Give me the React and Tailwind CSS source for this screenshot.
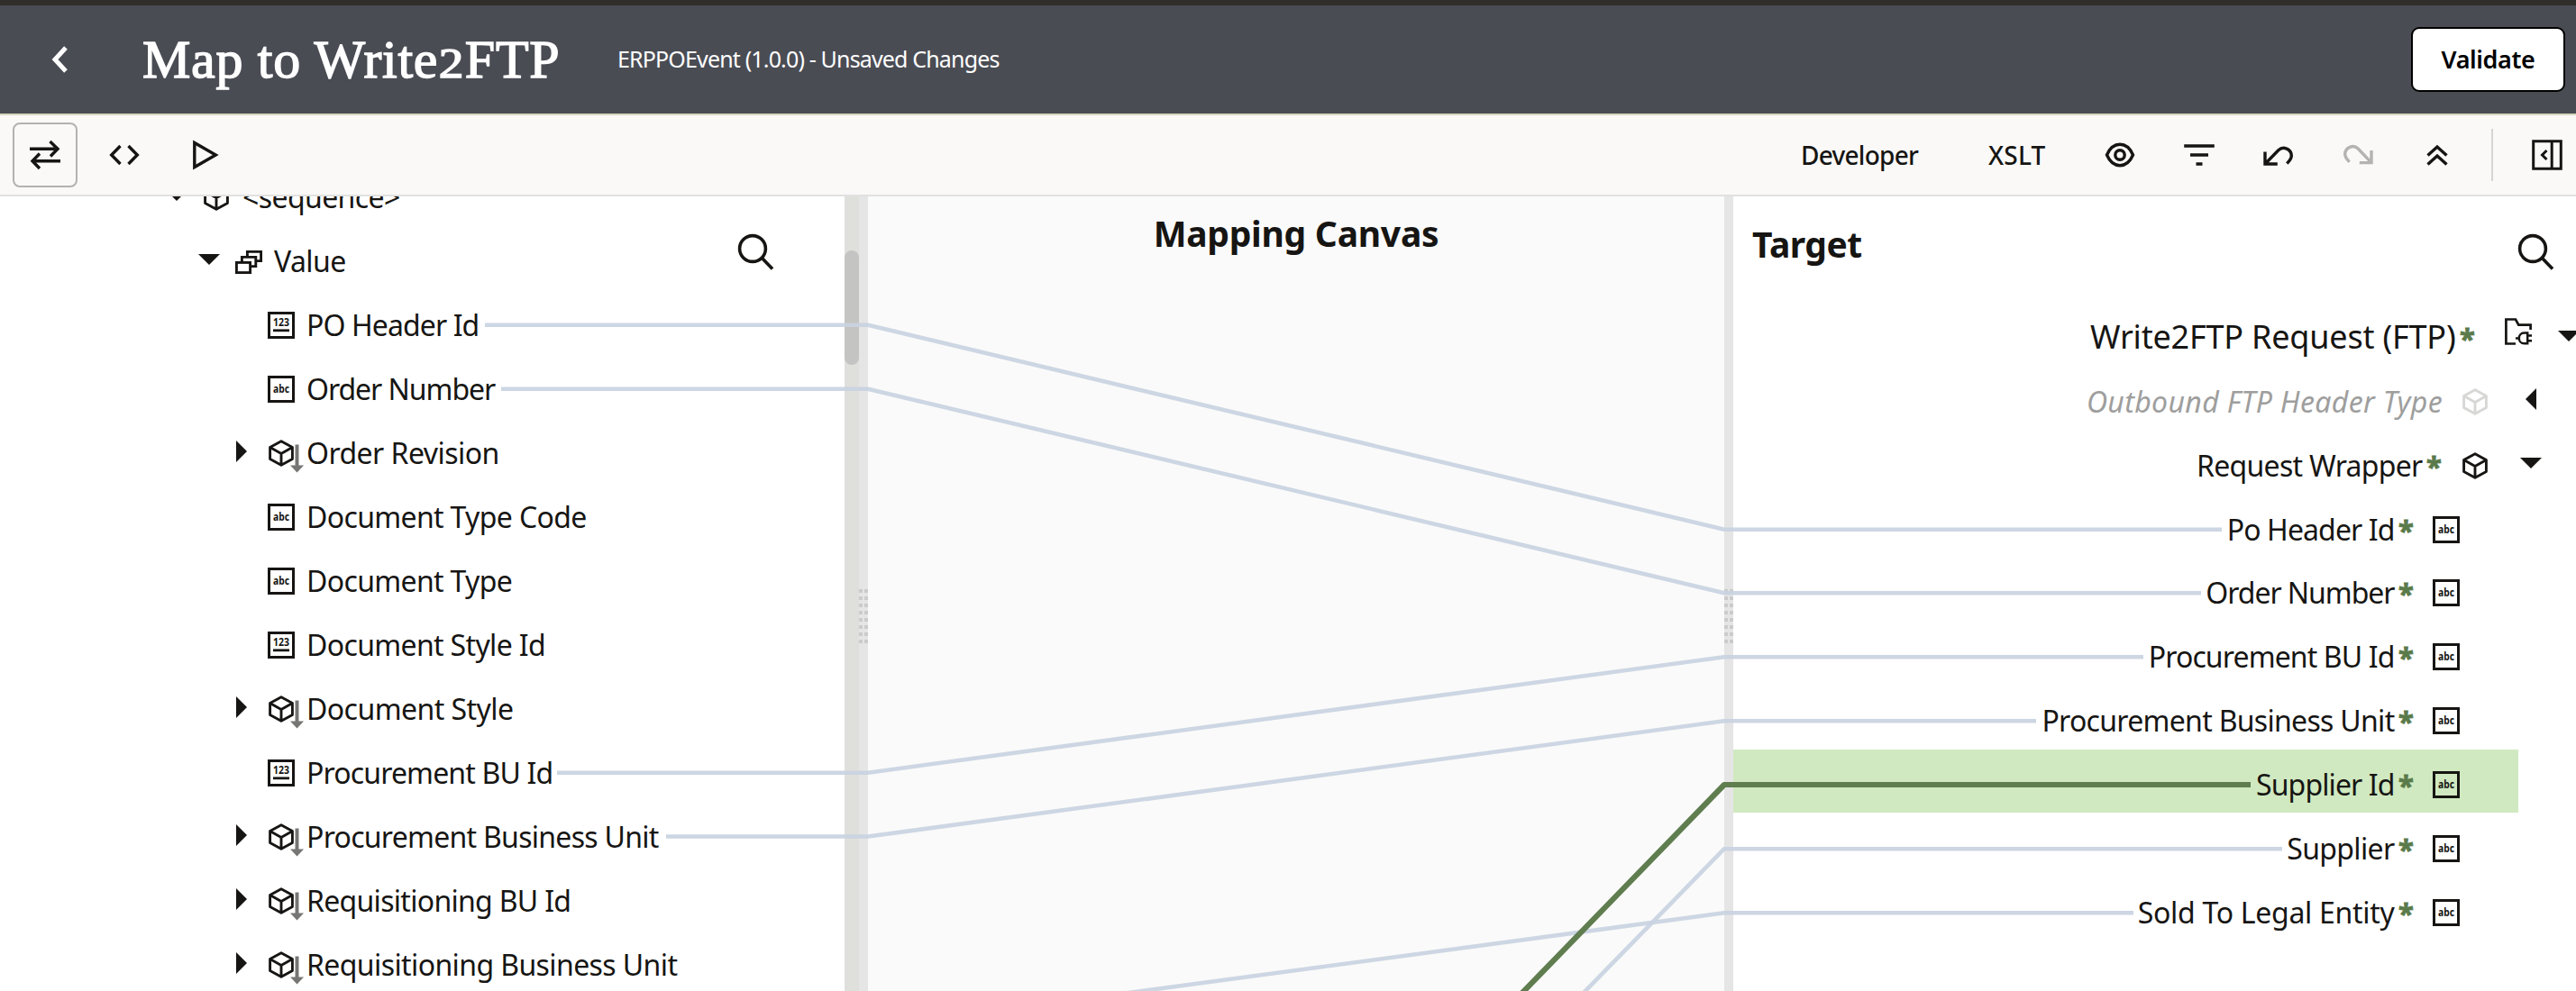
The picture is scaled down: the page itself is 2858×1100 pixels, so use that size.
const INK = '#161513';

function Abc() {
  return (
    <svg width="30" height="30" className="shrink-0" fill="none">
      <rect x="1.5" y="1.5" width="27" height="27" stroke={INK} strokeWidth="3" />
      <text x="6" y="19" fontSize="11.5" fontWeight="700" fill={INK} textLength="18" lengthAdjust="spacingAndGlyphs">abc</text>
    </svg>
  );
}

function Num() {
  return (
    <svg width="30" height="30" className="shrink-0" fill="none">
      <rect x="1.5" y="1.5" width="27" height="27" stroke={INK} strokeWidth="3" />
      <text x="6" y="16.2" fontSize="11.5" fontWeight="700" fill={INK} textLength="18" lengthAdjust="spacingAndGlyphs">123</text>
      <path d="M6 20.8H24" stroke={INK} strokeWidth="2.8" />
    </svg>
  );
}

function Cube({ color = INK }) {
  return (
    <svg width="30" height="30" className="shrink-0" fill="none" stroke={color} strokeWidth="2.9" strokeLinejoin="round">
      <path d="M15 1.8L27.4 8.6V21.4L15 28.2L2.6 21.4V8.6ZM2.6 8.6L15 15.6L27.4 8.6M15 15.6V28.2" />
    </svg>
  );
}

function CubeArrow() {
  return (
    <svg width="41" height="37" className="mt-[7px] shrink-0" fill="none">
      <path d="M15 1.8L27.4 8.6V21.4L15 28.2L2.6 21.4V8.6ZM2.6 8.6L15 15.6L27.4 8.6M15 15.6V28.2" stroke={INK} strokeWidth="2.9" strokeLinejoin="round" />
      <path d="M32.5 5.5V29" stroke="#767674" strokeWidth="4" />
      <path d="M25 28.5H40L32.5 36.5Z" fill="#767674" />
    </svg>
  );
}

function Stack() {
  return (
    <svg width="30" height="30" className="shrink-0" fill="none" stroke={INK} strokeWidth="2.9">
      <rect x="1.4" y="16.4" width="15.2" height="11.2" />
      <path d="M7.4 15.5V10.4H22.8V20.6H18" />
      <path d="M13.4 9.5V4.4H28.6V14.6H24" />
    </svg>
  );
}

function FolderPlug() {
  return (
    <svg width="30" height="30" className="-mt-[12px] shrink-0" fill="none" stroke={INK} strokeWidth="2.7">
      <path d="M12 28.5H1.4V1.5H12L15.3 7.6H28.6V13" />
      <path d="M25.2 16.5V28.3H21.5C18 28.3 15.8 25.5 15.8 22.4C15.8 19.2 18 16.5 21.5 16.5ZM12 22.4H15.8M25.5 19.5H30M25.5 25.3H30" strokeWidth="2.5" />
    </svg>
  );
}

const TRI = { down: 'M0 6H24L12 18Z', right: 'M6 0V24L18 12Z', left: 'M18 0V24L6 12Z' };
function Tri({ dir, className = '' }) {
  return (
    <svg width="24" height="24" className={`shrink-0 ${className}`}>
      {dir && <path d={TRI[dir]} fill={INK} />}
    </svg>
  );
}

function Search() {
  return (
    <svg width="44" height="44" fill="none" stroke={INK} strokeWidth="3.6" className="shrink-0">
      <circle cx="19" cy="19" r="14.4" />
      <path d="M29 29L41 41.5" />
    </svg>
  );
}

function Icon({ children, color = INK, className = '' }) {
  return (
    <svg width="40" height="40" fill="none" stroke={color} strokeWidth="3.4" className={`shrink-0 ${className}`}>
      {children}
    </svg>
  );
}

const sourceRows = [
  ['PO Header Id', 'num', 'tracking-[-0.9px]'],
  ['Order Number', 'abc', 'tracking-[-1.05px]'],
  ['Order Revision', 'cube', 'tracking-[-0.55px]'],
  ['Document Type Code', 'abc', 'tracking-[-0.65px]'],
  ['Document Type', 'abc', 'tracking-[-0.65px]'],
  ['Document Style Id', 'num', 'tracking-[-0.65px]'],
  ['Document Style', 'cube', 'tracking-[-0.55px]'],
  ['Procurement BU Id', 'num', 'tracking-[-0.85px]'],
  ['Procurement Business Unit', 'cube', 'tracking-[-0.72px]'],
  ['Requisitioning BU Id', 'cube', 'tracking-[-0.7px]'],
  ['Requisitioning Business Unit', 'cube', 'tracking-[-0.6px]'],
];

function SourceRow({ label, kind, tracking }) {
  return (
    <div className="h-[71px]">
      <div className="flex h-[70px] items-center pl-[256px]">
        <Tri dir={kind === 'cube' ? 'right' : null} className="-mt-[4px]" />
        <div className="ml-[17px] w-[43px] shrink-0">
          {kind === 'cube' ? <CubeArrow /> : kind === 'num' ? <Num /> : <Abc />}
        </div>
        <span className={`text-[32px] ${tracking}`}>{label}</span>
      </div>
    </div>
  );
}

const targetRows = [
  ['Po Header Id', 'tracking-[-0.9px]'],
  ['Order Number', 'tracking-[-1.05px]'],
  ['Procurement BU Id', 'tracking-[-0.88px]'],
  ['Procurement Business Unit', 'tracking-[-0.7px]'],
  ['Supplier Id', 'tracking-[-0.9px]'],
  ['Supplier', 'tracking-[-0.65px]'],
  ['Sold To Legal Entity', 'tracking-[-0.3px]'],
];

function Star({ className = '' }) {
  return (
    <span className={`ml-[4.5px] w-[17px] text-[31px] font-bold text-[#5a7a4a] [-webkit-text-stroke:0.9px_#5a7a4a] ${className}`}>*</span>
  );
}

function Grip() {
  return (
    <div className="mt-[436px] grid grid-cols-2 gap-x-[2px] gap-y-[4px]">
      {Array.from({ length: 16 }, (_, i) => (
        <span key={i} className="h-[4px] w-[4px] bg-[#cbcbcb]" />
      ))}
    </div>
  );
}

const links = [
  'M538 360.7H963L1913 587.7H2465',
  'M556 431.7H963L1913 658.3H2442',
  'M618 857.7H963L1913 729.3H2378',
  'M739 928.5H963L1913 800.3H2259',
  'M1753 1106L1913 942.2H2532',
  'M1222 1106L1913 1013.3H2367',
];

export default function App() {
  return (
    <div className="flex h-[1100px] w-[2858px] flex-col overflow-hidden whitespace-nowrap bg-white font-['Noto_Sans',sans-serif] text-[#161513]">
      <header className="flex h-[128px] shrink-0 items-center border-t-[6px] border-b-2 border-t-[#312d2a] border-b-[#d5d7c2] bg-[#4a4c54] text-white">
        <svg width="24" height="32" className="ml-[54px]" fill="none" stroke="#fff" strokeWidth="5">
          <path d="M19 3L7 16L19 29" />
        </svg>
        <h1 className="-mt-[1px] ml-[80px] w-[527px] font-['Liberation_Serif',serif] text-[60px] leading-[80px] tracking-[0.7px] [-webkit-text-stroke:1.4px_white]">
          Map to Write<span className="mx-[3px] inline-block scale-x-[1.2] text-[46px] leading-none">2</span>FTP
        </h1>
        <span className="text-[25px] tracking-[-0.84px]">ERPPOEvent (1.0.0) - Unsaved Changes</span>
        <button className="mr-[12px] ml-auto flex h-[72px] w-[171px] items-center justify-center rounded-[9px] border-2 border-black bg-white text-[27px] font-semibold tracking-[-0.4px] text-black">
          Validate
        </button>
      </header>

      <div className="flex h-[90px] shrink-0 items-center border-b-2 border-[#e1e1e0] bg-[#faf9f7]">
        <div className="ml-[14px] flex h-[72px] w-[72px] items-center justify-center rounded-[8px] border-2 border-[#b3b2b0]">
          <Icon>
            <path d="M3 13.3H35M25.5 5L34 13.3L26 21.5M37 26.7H5M14 18.5L6 26.7L14 35" />
          </Icon>
        </div>
        <Icon className="ml-[32px]">
          <path d="M15.5 10L5.7 20L15.5 30M24.5 10L34.3 20L24.5 30" />
        </Icon>
        <Icon className="ml-[50px]">
          <path d="M7.8 6.5V33.5L31.3 20Z" />
        </Icon>

        <span className="ml-auto text-[28px] font-medium tracking-[-0.75px]">Developer</span>
        <span className="ml-[78px] text-[28px] font-medium tracking-[0.2px]">XSLT</span>
        <Icon className="ml-[62.5px]">
          <path d="M5.5 20C9 12 14 8.3 20 8.3S31 12 34.5 20C31 28 26 31.7 20 31.7S9 28 5.5 20Z" />
          <circle cx="20" cy="20" r="5.2" />
        </Icon>
        <Icon className="ml-[48px]">
          <path d="M3.2 10H36.8M10 20H30M16.5 30H23.5" />
        </Icon>
        <Icon className="ml-[48px]">
          <path d="M5 16.5V30H18.8M5 30L19.8 14.8A8.6 8.6 0 0 1 34.3 20.8C34.3 24.6 32 26.6 29.3 29.5" />
        </Icon>
        <Icon className="ml-[48px]" color="#b4b3b1">
          <path d="M35 15V28.6H21.8M35 28.6L20.2 13A8.6 8.6 0 0 0 5.7 19C5.7 22.8 8 25 10.7 27.8" />
        </Icon>
        <Icon className="ml-[48px]">
          <path d="M9.5 20.5L20 11L30.5 20.5M9.5 30.5L20 21L30.5 30.5" />
        </Icon>
        <div className="ml-[40px] h-[58px] w-[2px] bg-[#d5d5d3]" />
        <Icon className="mr-[12px] ml-[40px]">
          <path d="M4.7 4.8H35.3V35.2H4.7ZM25.2 4.8V35.2M19.5 15L14.5 20L19.5 25" strokeWidth="3" />
        </Icon>
      </div>

      <main className="relative flex h-[882px] overflow-hidden">
        <section className="flex w-[937px] shrink-0 overflow-hidden bg-white">
          <div className="-mt-[34px] w-[816px] shrink-0">
            <div className="h-[71px]">
              <div className="flex h-[70px] items-center pl-[184px]">
                <Tri dir="down" className="-mt-[4px]" />
                <div className="ml-[17px] w-[44px]"><Cube /></div>
                <span className="text-[32px] tracking-[-0.6px]">&lt;sequence&gt;</span>
              </div>
            </div>
            <div className="h-[71px]">
              <div className="flex h-[70px] items-center pl-[220px]">
                <Tri dir="down" className="-mt-[4px]" />
                <div className="ml-[17px] w-[43px]"><Stack /></div>
                <span className="text-[32px] tracking-[-0.6px]">Value</span>
              </div>
            </div>
            {sourceRows.map(([label, kind, tracking]) => (
              <SourceRow key={label} label={label} kind={kind} tracking={tracking} />
            ))}
          </div>
          <div className="pt-[39px]"><Search /></div>
        </section>
        <div className="w-[16px] shrink-0 bg-[#dfdfdc] pt-[60px]">
          <div className="h-[127px] rounded-full bg-[#c4c4c2]" />
        </div>
        <div className="w-[10px] shrink-0 bg-[#e5e5e5]"><Grip /></div>
        <section className="w-[950px] shrink-0 bg-[#fafafa] pt-[11px] text-center">
          <h2 className="text-[39px] leading-[60px] font-bold tracking-[-0.25px]">Mapping Canvas</h2>
        </section>
        <div className="w-[10px] shrink-0 bg-[#e5e5e5]"><Grip /></div>
        <section className="w-[935px] shrink-0 bg-white">
          <div className="flex h-[117px] items-start justify-between pl-[21px] pr-[23px]">
            <h2 className="mt-[23px] text-[39px] leading-[60px] font-bold tracking-[-0.5px]">Target</h2>
            <div className="pt-[39px]"><Search /></div>
          </div>
          <div className="h-[72px]">
            <div className="-mr-[4px] flex h-[70px] items-center justify-end pt-[8px]">
              <span className="text-[36px] tracking-[-0.2px]">Write2FTP Request (FTP)</span>
              <Star className="mt-[3px] mr-[33px]" />
              <FolderPlug />
              <Tri dir="down" className="ml-[29px] -mt-[2px]" />
            </div>
          </div>
          <div className="h-[71px]">
            <div className="flex h-[70px] items-center justify-end pt-[8px] pr-[38px]">
              <span className="mr-[21px] text-[32px] tracking-[0.35px] text-[#9e9e9d] italic">Outbound FTP Header Type</span>
              <Cube color="#d7d7d6" />
              <Tri dir="left" className="ml-[35px] -mt-[6px]" />
            </div>
          </div>
          <div className="h-[71px]">
            <div className="flex h-[70px] items-center justify-end pt-[8px] pr-[38px]">
              <span className="text-[32px] tracking-[-0.72px]">Request Wrapper</span>
              <Star className="mr-[22px]" />
              <Cube />
              <Tri dir="down" className="ml-[35px] -mt-[6px]" />
            </div>
          </div>
          {targetRows.map(([label, tracking], i) => (
            <div key={label} className={i === 0 ? 'h-[70px]' : 'h-[71px]'}>
              <div className={`mr-[64px] flex h-[70px] items-center justify-end pt-[8px] pr-[65px] ${label === 'Supplier Id' ? 'bg-[#d0e9c0]' : ''}`}>
                <span className={`text-[32px] ${tracking}`}>{label}</span>
                <Star className="mr-[21px]" />
                <Abc />
              </div>
            </div>
          ))}
        </section>
        <svg className="pointer-events-none absolute inset-0" width="2858" height="882" viewBox="0 218 2858 882" fill="none" strokeLinejoin="round">
          {links.map((d) => (
            <path key={d} d={d} stroke="#c9d2e1" strokeWidth="4.6" strokeOpacity="0.92" />
          ))}
          <path d="M1685 1106L1913 871H2497" stroke="#5f7d4f" strokeWidth="6.2" />
        </svg>
      </main>
    </div>
  );
}
